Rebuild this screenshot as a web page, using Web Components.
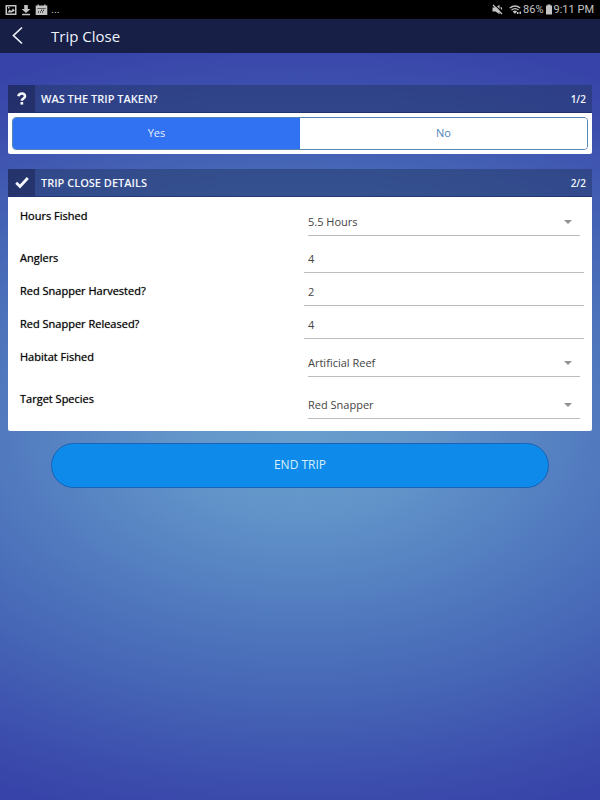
<!DOCTYPE html>
<html lang="en">
<head>
<meta charset="utf-8">
<meta name="viewport" content="width=device-width, initial-scale=1">
<title>Trip Close</title>
<style>
html {
    height: 100%;
}

body {
    margin: 0;
    min-height: 100%;
    font-family: "Open Sans", "Noto Sans", sans-serif;
    font-size: 11px;
    color: #111;
    background: #3640a6 radial-gradient(ellipse 108% 50% at 50% 54%, #699ecd 0%, #6294c9 20%, #5079be 47%, #4564b5 68%, #3d50ae 86%, #3743a8 100%) no-repeat;
    background-size: 100% 100vh;
}
</style>
</head>
<body>
<trip-page>
    <status-bar slot="top" battery="86%" time="9:11 PM"></status-bar>
    <nav-bar slot="top">Trip Close</nav-bar>

    <trip-panel step="1/2" icon="question">
        <span slot="title">WAS THE TRIP TAKEN?</span>
        <yes-no value="Yes"></yes-no>
    </trip-panel>

    <trip-panel step="2/2" icon="check">
        <span slot="title">TRIP CLOSE DETAILS</span>
        <field-list>
            <select-field label="Hours Fished" value="5.5 Hours"></select-field>
            <number-field label="Anglers" value="4"></number-field>
            <number-field label="Red Snapper Harvested?" value="2"></number-field>
            <number-field label="Red Snapper Released?" value="4"></number-field>
            <select-field label="Habitat Fished" value="Artificial Reef"></select-field>
            <select-field label="Target Species" value="Red Snapper"></select-field>
        </field-list>
    </trip-panel>

    <action-button slot="actions">END TRIP</action-button>
</trip-page>

<script>
// page frame: bars on top, panels, then the actions
const templatePage = document.createElement('template');
templatePage.innerHTML =
`
<style>
:host {
    display: block;
}

main {
    display: flex;
    flex-direction: column;
    gap: 15px;
    padding: 32px 8px 12px;
}

footer {
    padding: 0 51px;
}
</style>
<slot name="top"></slot>
<main><slot></slot></main>
<footer><slot name="actions"></slot></footer>
`;

class TripPage extends HTMLElement {
    constructor(){
        super();
        this.attachShadow({mode:'open'}).appendChild(templatePage.content.cloneNode(true));
    }
}

const templateStatus = document.createElement('template');
templateStatus.innerHTML =
`
<style>
:host {
    display: flex;
    justify-content: space-between;
    align-items: center;
    height: 19px;
    padding: 0 6px 0 5px;
    background: #000;
    color: #c4c4c4;
    font: 11px/19px Roboto, sans-serif;
}

div {
    display: flex;
    align-items: center;
}

.left {
    gap: 3px;
}

.right {
    gap: 1px;
}

svg {
    display: block;
    fill: currentColor;
}

.wifi {
    margin-left: 5px;
}
</style>
<div class="left">
    <svg width="12" height="12" viewBox="0 0 12 12"><path fill-rule="evenodd" d="M.5 1h11v10H.5zM2 2.500v7h8v-7zM2.500 8.500l2-3 1.700 1.500L8 4.500 9.500 6v1L6.500 8.500zM3 3h1.500v1.500H3z"/></svg>
    <svg width="12" height="12" viewBox="0 0 12 12"><path d="M4.200 1h3.600v4H10.500L6 9 1.500 5h2.700zM2 9.700h8v1.500H2z"/></svg>
    <svg width="13" height="12" viewBox="0 0 13 12"><path fill-rule="evenodd" d="M.7 1.500h1.800V.5h1.300v1h5.400v-1h1.300v1h1.800V11H.7zM2.300 4v.5h8.400V4zM6 5.700v1h1v-1zM8 5.700v1h1v-1zM3 7.600v1h1v-1zM5 7.600v1h1v-1zM7 7.600v1h1v-1z"/></svg>
    <span>...</span>
</div>
<div class="right">
    <svg width="11" height="11" viewBox="0 0 11 11"><path d="M.5 3.500H3.500L7.500.8v9.500L3.500 7.500H.5z"/><path d="M2 .2l9 9" stroke="#000" stroke-width="1.200"/><path d="M1 1l9 9M8.700 3.200q1 .8.900 2.300" fill="none" stroke="currentColor" stroke-width="1.300"/></svg>
    <svg class="wifi" width="13" height="11" viewBox="0 0 13 11"><path d="M.8 4Q6 0 11.200 4M2.500 6Q6 3.200 9.500 6M4.200 8Q6 6.500 7.600 8" fill="none" stroke="currentColor" stroke-width="1.400"/><path d="M4.500 8L6 10l1.500-2zM8 8h1.500v2H8zM10.500 7.500H12V10h-1.500z"/></svg>
    <span class="battery"></span>
    <svg width="8" height="11" viewBox="0 0 8 11"><path d="M2.500 .5h3v1H7v9H1v-9h1.500z"/></svg>
    <time></time>
</div>
`;

class StatusBar extends HTMLElement {
    constructor(){
        super();
        this._sR = this.attachShadow({mode:'open'});
        this._sR.appendChild(templateStatus.content.cloneNode(true));
    }

    connectedCallback() {
        this._sR.querySelector('.battery').textContent = this.getAttribute('battery');
        this._sR.querySelector('time').textContent = this.getAttribute('time');
    }
}

const templateNav = document.createElement('template');
templateNav.innerHTML =
`
<style>
:host {
    display: flex;
    align-items: center;
    gap: 15px;
    height: 34px;
    background: #171f46;
    color: #eef2fa;
}

button {
    width: 36px;
    height: 34px;
    padding: 0;
    border: 0;
    background: none;
    color: inherit;
}

svg {
    display: block;
    margin: 0 auto;
}

h1 {
    margin: 0;
    font-size: 15px;
    font-weight: 400;
    line-height: 34px;
}
</style>
<button type="button" aria-label="Back">
    <svg width="14" height="20" viewBox="0 0 14 20"><path d="M11 1.500L2.500 9.500 11 17.500" fill="none" stroke="currentColor" stroke-width="1.700"/></svg>
</button>
<h1><slot></slot></h1>
`;

class NavBar extends HTMLElement {
    constructor(){
        super();
        this.attachShadow({mode:'open'}).appendChild(templateNav.content.cloneNode(true));
    }
}

const panelIcons = {
    question: '<path d="M3.400 4.200Q4 1.500 6.900 1.500T10 4.200Q10 5.700 8.300 6.600 6.800 7.400 6.800 8.800" fill="none" stroke="currentColor" stroke-width="2.600"/><path d="M5.500 10h2.700v2.600H5.500z"/>',
    check: '<path d="M1.200 6.800L5 10.500 12.800 2" fill="none" stroke="currentColor" stroke-width="2.800"/>'
};

const templatePanel = document.createElement('template');
templatePanel.innerHTML =
`
<style>
:host {
    display: block;
}

header {
    display: flex;
    align-items: center;
    height: 28px;
    box-sizing: border-box;
    border-bottom: 1px solid rgba(20, 30, 90, .5);
    background: rgba(33, 54, 100, .5);
    color: #f4f7fd;
}

.icon {
    display: flex;
    align-items: center;
    justify-content: center;
    width: 27px;
    align-self: stretch;
    background: rgba(25, 32, 80, .5);
}

svg {
    display: block;
    fill: currentColor;
}

h2 {
    flex: 1;
    margin: 0;
    padding-left: 6px;
    font-size: 11px;
    font-weight: 600;
}

.step {
    padding-right: 6px;
    font-weight: 600;
    font-size: 10px;
}

.body {
    background: #fff;
    border-radius: 0 0 2px 2px;
}
</style>
<section>
    <header>
        <span class="icon"><svg width="14" height="14" viewBox="0 0 14 14" aria-hidden="true"></svg></span>
        <h2><slot name="title"></slot></h2>
        <span class="step"></span>
    </header>
    <div class="body"><slot></slot></div>
</section>
`;

class TripPanel extends HTMLElement {
    constructor(){
        super();
        this._sR = this.attachShadow({mode:'open'});
        this._sR.appendChild(templatePanel.content.cloneNode(true));
    }

    connectedCallback() {
        this._sR.querySelector('svg').innerHTML = panelIcons[this.getAttribute('icon')] || '';
        this._sR.querySelector('.step').textContent = this.getAttribute('step');
    }
}

const templateYesNo = document.createElement('template');
templateYesNo.innerHTML =
`
<style>
:host {
    display: block;
    padding: 4px;
}

div {
    display: flex;
    height: 33px;
    box-sizing: border-box;
    border: 1px solid #5586b4;
    border-radius: 4px;
    overflow: hidden;
}

button {
    flex: 1;
    padding: 0 0 2px;
    border: 0;
    background: #fff;
    color: #4c86b8;
    font: inherit;
}

button[aria-pressed="true"] {
    background: #3072f2;
    color: #e6effd;
}
</style>
<div role="group" aria-label="Was the trip taken?">
    <button type="button">Yes</button>
    <button type="button">No</button>
</div>
`;

class YesNo extends HTMLElement {
    static get observedAttributes() {
        return ['value'];
    }

    constructor(){
        super();
        this._sR = this.attachShadow({mode:'open'});
        this._sR.appendChild(templateYesNo.content.cloneNode(true));
        this.$buttons = this._sR.querySelectorAll('button');
        this.$buttons.forEach(b => {
            b.addEventListener('click', () => this.setAttribute('value', b.textContent));
        });
    }

    attributeChangedCallback() {
        this.$buttons.forEach(b => {
            b.setAttribute('aria-pressed', String(b.textContent === this.getAttribute('value')));
        });
    }
}

const templateList = document.createElement('template');
templateList.innerHTML =
`
<style>
:host {
    display: flex;
    flex-direction: column;
    padding: 7px 8px 2px;
}
</style>
<slot></slot>
`;

class FieldList extends HTMLElement {
    constructor(){
        super();
        this.attachShadow({mode:'open'}).appendChild(templateList.content.cloneNode(true));
    }
}

// both kinds of row share the two columns and the label
const rowStyle =
`
:host {
    display: grid;
    grid-template-columns: 1fr 1fr;
    align-items: start;
}

label {
    padding-left: 4px;
    line-height: 24px;
    color: #000;
    text-shadow: 0 0 1px rgba(0, 0, 0, .6);
}

input, select {
    box-sizing: border-box;
    width: 100%;
    margin: 0;
    border: 0;
    border-bottom: 1px solid #bcbcbc;
    border-radius: 0;
    background: none;
    font: inherit;
    color: #444;
    appearance: none;
    outline: none;
}
`;

const templateSelect = document.createElement('template');
templateSelect.innerHTML =
`
<style>
${rowStyle}
:host {
    height: 42px;
}

.control {
    display: grid;
    align-items: center;
    margin: 4px 4px 0 8px;
}

select, svg {
    grid-area: 1 / 1;
}

select {
    height: 28px;
    padding: 0 24px 0 0;
}

svg {
    justify-self: end;
    margin-right: 8px;
    fill: #929292;
    pointer-events: none;
}
</style>
<label for="field"></label>
<div class="control">
    <select id="field"><option></option></select>
    <svg width="8" height="4" viewBox="0 0 8 4"><path d="M0 0h8L4 4z"/></svg>
</div>
`;

const templateNumber = document.createElement('template');
templateNumber.innerHTML =
`
<style>
${rowStyle}
:host {
    height: 33px;
}

.control {
    padding-left: 4px;
}

input {
    display: block;
    height: 27px;
    padding: 0 4px 2px;
}
</style>
<label for="field"></label>
<div class="control"><input id="field" type="text" inputmode="numeric"></div>
`;

class SelectField extends HTMLElement {
    constructor(){
        super();
        this._sR = this.attachShadow({mode:'open'});
        this._sR.appendChild(templateSelect.content.cloneNode(true));
    }

    connectedCallback() {
        this._sR.querySelector('label').textContent = this.getAttribute('label');
        this._sR.querySelector('option').textContent = this.getAttribute('value');
    }
}

class NumberField extends HTMLElement {
    constructor(){
        super();
        this._sR = this.attachShadow({mode:'open'});
        this._sR.appendChild(templateNumber.content.cloneNode(true));
    }

    connectedCallback() {
        this._sR.querySelector('label').textContent = this.getAttribute('label');
        this._sR.querySelector('input').value = this.getAttribute('value');
    }
}

const templateAction = document.createElement('template');
templateAction.innerHTML =
`
<style>
:host {
    display: block;
}

button {
    display: block;
    width: 100%;
    height: 45px;
    padding: 0 0 2px;
    border: 1px solid #1c62b4;
    border-radius: 23px;
    background: #0e8aea;
    color: #d8f0fc;
    font: inherit;
    font-size: 12px;
}
</style>
<button type="button"><slot></slot></button>
`;

class ActionButton extends HTMLElement {
    constructor(){
        super();
        this.attachShadow({mode:'open'}).appendChild(templateAction.content.cloneNode(true));
    }
}

window.customElements.define('trip-page', TripPage);
window.customElements.define('status-bar', StatusBar);
window.customElements.define('nav-bar', NavBar);
window.customElements.define('trip-panel', TripPanel);
window.customElements.define('yes-no', YesNo);
window.customElements.define('field-list', FieldList);
window.customElements.define('select-field', SelectField);
window.customElements.define('number-field', NumberField);
window.customElements.define('action-button', ActionButton);
</script>
</body>
</html>
